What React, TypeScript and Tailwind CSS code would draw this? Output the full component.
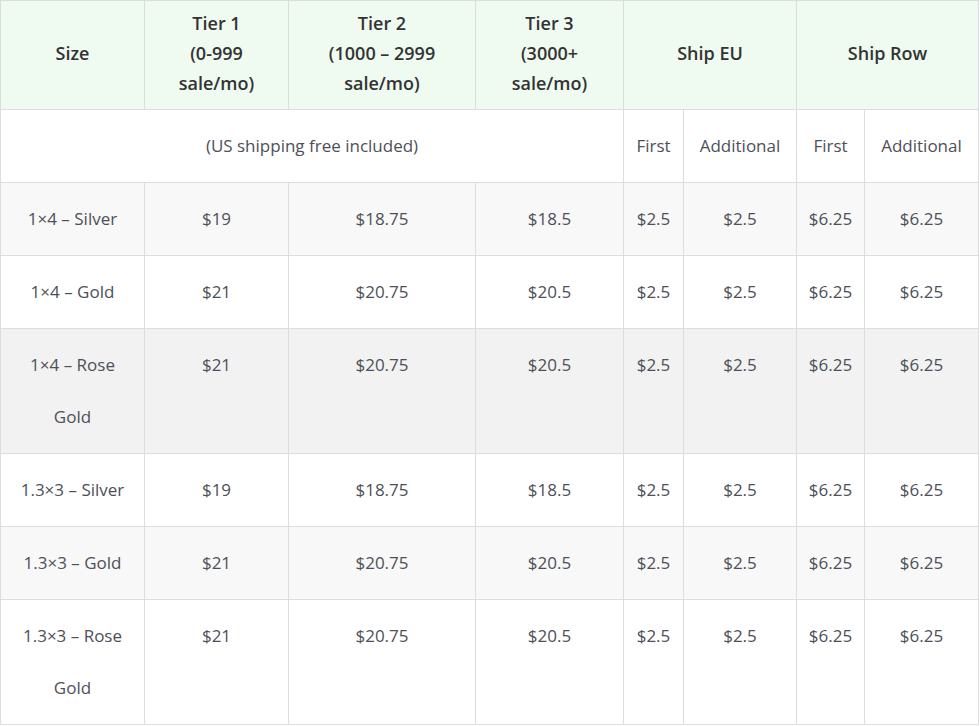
import React from 'react';

interface Row {
  size: React.ReactNode;
  tier1: string;
  tier2: string;
  tier3: string;
  euFirst: string;
  euAdd: string;
  rowFirst: string;
  rowAdd: string;
  bg: string;
}

const rows: Row[] = [
  { size: '1×4 – Silver', tier1: '$19', tier2: '$18.75', tier3: '$18.5', euFirst: '$2.5', euAdd: '$2.5', rowFirst: '$6.25', rowAdd: '$6.25', bg: 'bg-[#f8f8f8]' },
  { size: '1×4 – Gold', tier1: '$21', tier2: '$20.75', tier3: '$20.5', euFirst: '$2.5', euAdd: '$2.5', rowFirst: '$6.25', rowAdd: '$6.25', bg: 'bg-white' },
  { size: <>1×4 – Rose<br />Gold</>, tier1: '$21', tier2: '$20.75', tier3: '$20.5', euFirst: '$2.5', euAdd: '$2.5', rowFirst: '$6.25', rowAdd: '$6.25', bg: 'bg-[#f2f2f2]' },
  { size: '1.3×3 – Silver', tier1: '$19', tier2: '$18.75', tier3: '$18.5', euFirst: '$2.5', euAdd: '$2.5', rowFirst: '$6.25', rowAdd: '$6.25', bg: 'bg-white' },
  { size: '1.3×3 – Gold', tier1: '$21', tier2: '$20.75', tier3: '$20.5', euFirst: '$2.5', euAdd: '$2.5', rowFirst: '$6.25', rowAdd: '$6.25', bg: 'bg-[#f8f8f8]' },
  { size: <>1.3×3 – Rose<br />Gold</>, tier1: '$21', tier2: '$20.75', tier3: '$20.5', euFirst: '$2.5', euAdd: '$2.5', rowFirst: '$6.25', rowAdd: '$6.25', bg: 'bg-white' },
];

const th = 'border border-[#dddddd] px-2 pt-[6px] pb-[11px] align-middle text-center font-semibold text-[18px] leading-[30px] text-[#333333]';
const td = 'border border-[#dddddd] px-1 pt-[10px] pb-[10px] align-top text-center text-[17px] leading-[52px] whitespace-nowrap';

export default function App() {
  return (
    <div className="w-[980px] bg-white" style={{ fontFamily: '"Open Sans", "Liberation Sans", sans-serif' }}>
      <table className="w-[978px] table-fixed border-collapse text-[#4d5058]">
        <colgroup>
          <col className="w-[144px]" />
          <col className="w-[144px]" />
          <col className="w-[187px]" />
          <col className="w-[148px]" />
          <col className="w-[60px]" />
          <col className="w-[113px]" />
          <col className="w-[68px]" />
          <col className="w-[114px]" />
        </colgroup>
        <thead>
          <tr className="h-[109px] bg-[#effaf0]">
            <th className={th}>Size</th>
            <th className={th}>Tier 1<br />(0-999<br />sale/mo)</th>
            <th className={th}>Tier 2<br />(1000 – 2999<br />sale/mo)</th>
            <th className={th}>Tier 3<br />(3000+<br />sale/mo)</th>
            <th className={th} colSpan={2}>Ship EU</th>
            <th className={th} colSpan={2}>Ship Row</th>
          </tr>
        </thead>
        <tbody>
          <tr className="bg-white">
            <td className={td} colSpan={4}>(US shipping free included)</td>
            <td className={td}>First</td>
            <td className={td}>Additional</td>
            <td className={td}>First</td>
            <td className={td}>Additional</td>
          </tr>
          {rows.map((r, i) => (
            <tr key={i} className={r.bg}>
              <td className={td}>{r.size}</td>
              <td className={td}>{r.tier1}</td>
              <td className={td}>{r.tier2}</td>
              <td className={td}>{r.tier3}</td>
              <td className={td}>{r.euFirst}</td>
              <td className={td}>{r.euAdd}</td>
              <td className={td}>{r.rowFirst}</td>
              <td className={td}>{r.rowAdd}</td>
            </tr>
          ))}
        </tbody>
      </table>
    </div>
  );
}
